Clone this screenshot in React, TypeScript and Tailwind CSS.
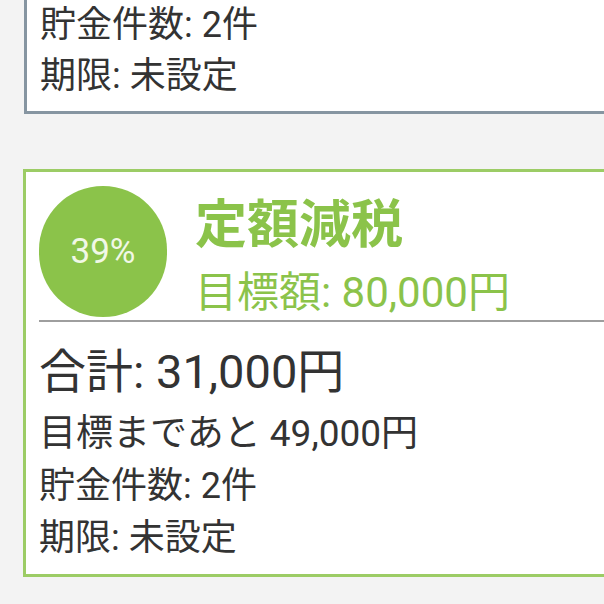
export default function App() {
  return (
    <div className="w-[604px] h-[604px] overflow-hidden bg-[#f3f3f3] text-[#333333] [font-family:Roboto,'Noto_Sans_CJK_JP',sans-serif]">
      <div className="mt-[-2px] ml-[24px] w-[640px] bg-white border-[3px] border-t-0 border-[#8695a1] pl-[13px] pt-[2px] pb-[9px]">
        <div className="text-[36px] leading-[51px] whitespace-nowrap">貯金件数: 2件</div>
        <div className="text-[36px] leading-[51px] whitespace-nowrap">期限: 未設定</div>
      </div>
      <div className="mt-[55px] ml-[23px] w-[640px] bg-white border-[3px] border-[#9ccc65]">
        <div className="pl-[13px] pt-[14px]">
          <div className="flex items-start gap-[28px]">
            <div className="w-[128px] h-[131px] rounded-full bg-[#8bc34a] flex items-center justify-center shrink-0">
              <span className="text-[35px] text-[#f1f8e6] leading-none">39%</span>
            </div>
            <div className="flex flex-col text-[#8bc34a] whitespace-nowrap">
              <div className="text-[52px] font-bold leading-[80px]">定額減税</div>
              <div className="text-[42px] leading-[54px]">目標額: 80,000円</div>
            </div>
          </div>
          <div className="h-[2px] bg-[#9e9e9e]" />
        </div>
        <div className="pl-[13px] pt-[14px] pb-[10px] whitespace-nowrap">
          <div className="text-[47px] leading-[72px]">合計: 31,000円</div>
          <div className="text-[37px] leading-[52px]">目標まであと 49,000円</div>
          <div className="text-[36px] leading-[52px]">貯金件数: 2件</div>
          <div className="text-[36px] leading-[52px]">期限: 未設定</div>
        </div>
      </div>
    </div>
  );
}
